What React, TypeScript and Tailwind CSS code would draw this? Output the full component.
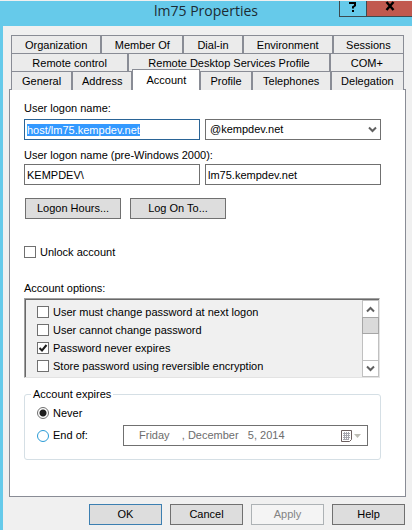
import React, { useEffect, useRef, useState } from 'react';
import { clsx } from 'clsx';

interface TabRowProps {
  tabs: string[];
  className: string;
  active?: string;
}

const options = [
  'User must change password at next logon',
  'User cannot change password',
  'Password never expires',
  'Store password using reversible encryption',
];

const TabRow = ({ tabs, className, active }: TabRowProps) => (
  <div className={clsx('grid h-[18px]', className)}>
    {tabs.map(tab => (
      <button
        key={tab}
        role="tab"
        aria-selected={tab === active}
        className={clsx(
          'border-x border-t border-[#898c95] whitespace-nowrap text-center',
          tab === active
            ? 'relative z-10 -mt-0.5 h-[21px] bg-white leading-4'
            : 'bg-[#ebebeb] leading-4'
        )}
      >
        {tab}
      </button>
    ))}
  </div>
);

const CheckBox = ({ label, defaultChecked }: { label: string; defaultChecked?: boolean }) => (
  <label className="flex h-[18px] items-center gap-1">
    <span className="relative flex size-3 shrink-0">
      <input
        type="checkbox"
        defaultChecked={defaultChecked}
        className="peer size-3 appearance-none border border-[#707070] bg-white"
      />
      <svg
        viewBox="0 0 12 12"
        className="pointer-events-none absolute inset-0 hidden peer-checked:block"
        fill="none"
        stroke="#1e1e1e"
        strokeWidth="2"
      >
        <path d="M2.5 6 L5 8.5 L9.5 3" />
      </svg>
    </span>
    {label}
  </label>
);

const Radio = ({ label, checked, onChange }: { label: string; checked: boolean; onChange: () => void }) => (
  <label className="flex items-center gap-1">
    <input
      type="radio"
      name="expires"
      checked={checked}
      onChange={onChange}
      className="size-3 shrink-0 appearance-none rounded-full border border-[#2a9bd6] bg-white checked:border-[#707070] checked:bg-[radial-gradient(circle,#1e1e1e_3px,white_4px)]"
    />
    {label}
  </label>
);

const Chevron = ({ up, className }: { up?: boolean; className?: string }) => (
  <svg viewBox="0 0 9 7" className={clsx('h-[7px] w-[9px]', className)} fill="none" stroke="#606060" strokeWidth="2">
    <path d={up ? 'M1 5.5 L4.5 2 L8 5.5' : 'M1 1.5 L4.5 5 L8 1.5'} />
  </svg>
);

const App = () => {
  const logonRef = useRef<HTMLInputElement>(null);
  const [expires, setExpires] = useState<'never' | 'end'>('never');

  useEffect(() => {
    logonRef.current?.focus();
    logonRef.current?.select();
  }, []);

  const field = 'h-[21px] w-full min-w-0 border border-[#707070] bg-white px-0.5 outline-none';
  const button = 'h-[21px] border border-[#707070] bg-[#dddddd]';

  return (
    <div className="min-h-screen bg-[#f0f0f0] border-l-[3px] border-[#66caea] text-[11px] text-black font-['Liberation_Sans',Arial,sans-serif]">
      {/* Title bar */}
      <header className="-ml-[3px] grid h-[26px] grid-cols-[1fr_auto_1fr] border-t border-t-[#f0f0f0] bg-[#66caea]">
        <h1 className="col-start-2 text-sm leading-5 text-[#1c2b33] font-['Open_Sans',sans-serif]">lm75 Properties</h1>
        <div className="flex h-4 justify-end">
          <button aria-label="Help" className="flex w-7 justify-center border-x border-b border-[#3c4a50]">
            <svg viewBox="0 0 8 12" className="h-3 w-2" fill="none" stroke="black" strokeWidth="2">
              <path d="M1 3 V2 H6 V4.5 L4 6 V7.5 M3 10 H5" />
            </svg>
          </button>
          <button aria-label="Close" className="flex w-[45px] justify-center border-b border-[#3c4a50] bg-[#c1594f]">
            <svg viewBox="0 0 10 10" className="h-2.5 w-2.5" fill="none" stroke="black" strokeWidth="2.4">
              <path d="M1.5 1 L8.5 9 M8.5 1 L1.5 9" />
            </svg>
          </button>
        </div>
      </header>

      <main className="pt-[9px] pr-[6px] pl-[6px]">
        <div role="tablist" className="mx-0.5">
          <TabRow
            className="grid-cols-[90fr_82fr_59fr_90fr_71fr]"
            tabs={['Organization', 'Member Of', 'Dial-in', 'Environment', 'Sessions']}
          />
          <TabRow
            className="grid-cols-[117fr_201fr_74fr]"
            tabs={['Remote control', 'Remote Desktop Services Profile', 'COM+']}
          />
          <TabRow
            className="grid-cols-[61fr_60fr_68fr_51fr_79fr_73fr]"
            tabs={['General', 'Address', 'Account', 'Profile', 'Telephones', 'Delegation']}
            active="Account"
          />
        </div>

        {/* Account page */}
        <div role="tabpanel" className="border border-[#898c95] bg-white pt-[11px] pr-6 pb-9 pl-3.5">
          <div className="grid grid-cols-2 gap-x-[5px]">
            <label htmlFor="logon" className="col-span-2 h-[18px] leading-[14px]">User logon name:</label>
            <input
              id="logon"
              ref={logonRef}
              defaultValue="host/lm75.kempdev.net"
              className="h-[21px] w-full min-w-0 border border-[#2a6496] bg-white px-0.5 outline-none selection:bg-[#3399ff] selection:text-white"
            />
            <div className="relative">
              <select aria-label="Domain suffix" className={clsx(field, 'appearance-none pl-1')}>
                <option>@kempdev.net</option>
              </select>
              <Chevron className="pointer-events-none absolute top-[7px] right-1" />
            </div>
            <label htmlFor="prelogon" className="col-span-2 mt-2 h-4 leading-[14px]">User logon name (pre-Windows 2000):</label>
            <input aria-label="Domain" defaultValue="KEMPDEV\" className={field} />
            <input id="prelogon" defaultValue="lm75.kempdev.net" className={field} />
          </div>

          <div className="mt-[13px] flex gap-[9px] pl-px">
            <button className={clsx(button, 'w-24')}>Logon Hours...</button>
            <button className={clsx(button, 'w-24')}>Log On To...</button>
          </div>

          <div className="mt-6">
            <CheckBox label="Unlock account" />
          </div>

          <div id="options-label" className="mt-5 h-[17px] leading-[14px]">Account options:</div>
          <div
            role="group"
            aria-labelledby="options-label"
            className="mr-px border border-t-[#a0a0a0] border-r-[#e3e3e3] border-b-[#e3e3e3] border-l-[#a0a0a0]"
          >
            <div className="flex h-[78px] justify-between border-t border-l border-[#696969] bg-[#f0f0f0]">
              <div className="pt-[3px] pl-[11px]">
                {options.map(option => (
                  <CheckBox key={option} label={option} defaultChecked={option === 'Password never expires'} />
                ))}
              </div>
              <div className="flex w-[17px] flex-col border border-[#c0c0c0] bg-white">
                <button aria-label="Scroll up" className="flex h-4 items-center justify-center">
                  <Chevron up />
                </button>
                <div className="-mx-px h-[17px] border border-[#a6a6a6] bg-[#dadada]" />
                <button aria-label="Scroll down" className="mt-auto flex h-4 items-center justify-center border-t border-[#c0c0c0]">
                  <Chevron />
                </button>
              </div>
            </div>
          </div>

          <fieldset className="mt-[9px] h-[73px] rounded-[3px] border border-[#d5dfe5] pr-3 pl-3">
            <legend className="-ml-1.5 px-0.5 leading-[14px]">Account expires</legend>
            <div className="flex h-6 items-center">
              <Radio label="Never" checked={expires === 'never'} onChange={() => setExpires('never')} />
            </div>
            <div className="flex h-[21px] items-center">
              <div className="w-[86px] shrink-0">
                <Radio label="End of:" checked={expires === 'end'} onChange={() => setExpires('end')} />
              </div>
              <div className="flex h-[21px] min-w-0 grow items-center border border-[#707070] pr-1.5 pl-[15px] text-[#6d6d6d]">
                <input
                  aria-label="Expiry date"
                  disabled={expires === 'never'}
                  defaultValue="Friday    , December   5, 2014"
                  className="min-w-0 grow bg-transparent"
                />
                <button aria-label="Open calendar" disabled={expires === 'never'}>
                  <svg viewBox="0 0 20 12" className="h-3 w-5" fill="none">
                    <path d="M.5 .5 H10.5 V9.5 L8.5 11.5 H.5 Z" stroke="#6b5f5f" />
                    <path d="M2 3.5 H9 M2 5.5 H9 M2 7.5 H9 M2 9.5 H8 M3.5 2 V10 M5.5 2 V10 M7.5 2 V10" stroke="#a5a5ad" />
                    <path d="M13 4 H20 L16.5 8 Z" fill="#bdbdb5" />
                  </svg>
                </button>
              </div>
            </div>
          </fieldset>
        </div>

        <footer className="mt-[7px] flex justify-end gap-2 pr-px pb-1.5">
          <button className="h-[21px] w-[73px] border border-[#3c7fb1] bg-[#dddddd]">OK</button>
          <button className={clsx(button, 'w-[73px]')}>Cancel</button>
          <button disabled className="h-[21px] w-[73px] border border-[#adb2b5] bg-[#f4f4f4] text-[#838383]">Apply</button>
          <button className={clsx(button, 'w-[73px]')}>Help</button>
        </footer>
      </main>
    </div>
  );
};

export default App;
